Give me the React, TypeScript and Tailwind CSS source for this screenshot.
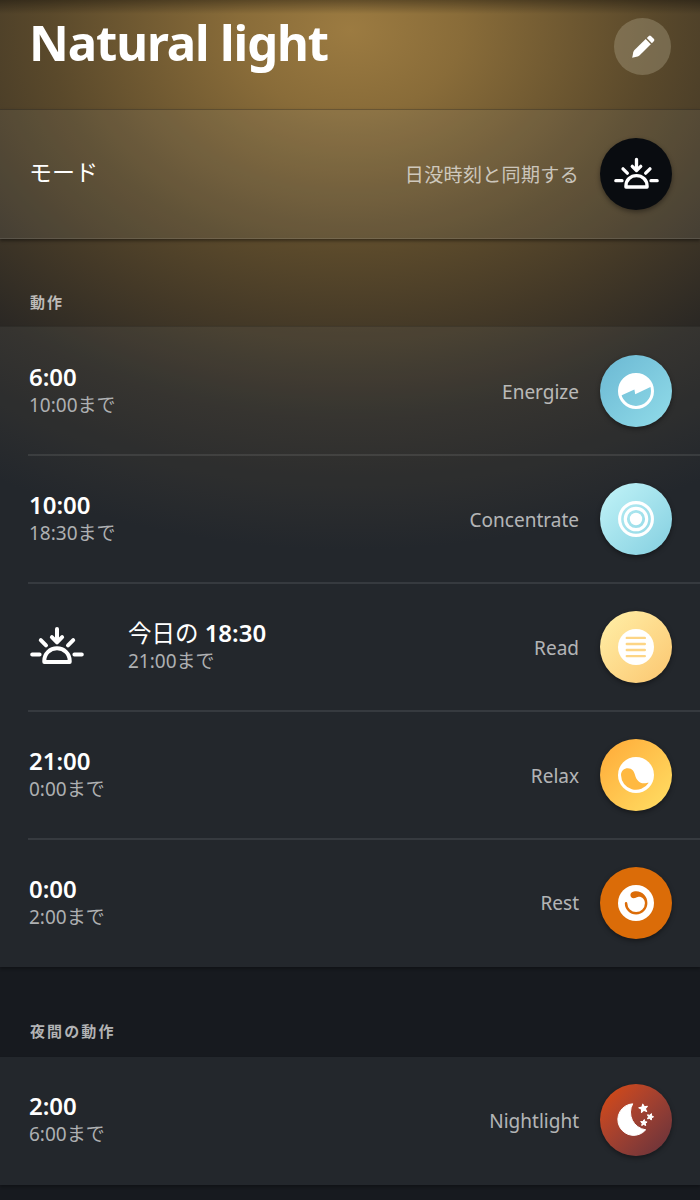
import type { ReactNode } from 'react';

function SunsetIcon({ className }: { className: string }) {
  return (
    <svg viewBox="0 0 54 38" className={className} fill="none" stroke="white" strokeWidth="4" strokeLinecap="round" strokeLinejoin="round">
      <path d="M27 3V15M21.9 11.2 27 16.3 32.1 11.2" />
      <path d="M10.8 14.2 16 19.4M43.2 14.2 38 19.4M2.2 28.4H9.6M44.4 28.4H51.8" />
      <path d="M14.3 36V34.8C14.3 27.6 20 22.3 27 22.3S39.7 27.6 39.7 34.8V36Z" />
    </svg>
  );
}

function EnergizeIcon() {
  return (
    <svg viewBox="0 0 36 36" className="size-9">
      <circle cx="18" cy="18" r="16.5" fill="none" stroke="white" strokeWidth="3" />
      <path d="M1.5 23.2A17.3 17.3 0 0 1 18 .7A17.3 17.3 0 0 1 34 13.2L17.2 21.2 16.4 16.4Z" fill="white" />
    </svg>
  );
}

function ConcentrateIcon() {
  return (
    <svg viewBox="0 0 36 36" className="size-9" fill="none" stroke="white">
      <circle cx="18" cy="18" r="16.4" strokeWidth="3.1" />
      <circle cx="18" cy="18" r="10.7" strokeWidth="3.2" />
      <circle cx="18" cy="18" r="6.2" fill="white" stroke="none" />
    </svg>
  );
}

function ReadIcon() {
  return (
    <svg viewBox="0 0 36 36" className="size-9">
      <circle cx="18" cy="18" r="18" fill="white" />
      <path d="M8.8 8.9H26.8M8.8 15H26.8M8.8 21H26.8M8.8 27.1H26.8" stroke="#fdd585" strokeWidth="2.4" strokeLinecap="round" />
    </svg>
  );
}

function RelaxIcon() {
  return (
    <svg viewBox="0 0 36 36" className="size-9">
      <circle cx="18" cy="18" r="18" fill="white" />
      <path d="M3 18C3 13.6 6.3 11.2 9.8 11.2C14.3 11.2 16 14.4 17.1 18.2C18.3 22.7 21.3 26.3 25.8 26.3C28.4 26.3 30 25.6 30.7 25.8A15 15 0 0 1 3 18Z" fill="#ffb941" />
    </svg>
  );
}

function RestIcon() {
  return (
    <svg viewBox="0 0 36 36" className="size-9">
      <circle cx="18" cy="18" r="18" fill="white" />
      <path d="M15.8 6.6C23.3 5.1 29.4 10.8 29.4 18A11.3 11.3 0 0 1 6.8 18.2Q6.9 16.9 8.1 16.9T9.3 18.2A8.8 8.8 0 0 0 26.9 18.2C26.9 14 23.3 11.2 19.8 12C18.3 12.3 17.4 13.2 15.8 13.2C13.6 13.2 12.4 11.8 12.4 10C12.4 8.2 13.8 7 15.8 6.6Z" fill="#db6c08" />
    </svg>
  );
}

function NightlightIcon() {
  return (
    <svg viewBox="0 0 36 36" className="size-9 overflow-visible" fill="white" stroke="white" strokeLinejoin="round">
      <path d="M14.7 1.8A15.8 15.8 0 1 0 27.7 27.8A17.6 17.6 0 0 1 14.7 1.8Z" strokeWidth="1" />
      <path d="m24.8 2.2 1.5 2.6 3-.4-2 2.3 1.3 2.7-2.9-1.1-2.2 2.1.1-3.1-2.7-1.5 3-.7Z" strokeWidth="1.2" />
      <path d="m33.4 11.6.2 2.3 2 .9-2 1-.3 2.3-1.6-1.7-2.3.4 1.1-2-1.1-2 2.3.4Z" strokeWidth="1" />
      <path d="m26.3 17.5.6 2.2 2.2.3-1.8 1.4.4 2.2-2-1.2-2 1.1.5-2.3-1.6-1.5 2.2-.2Z" strokeWidth="1" />
    </svg>
  );
}

function Scene({ name, color, children }: { name: ReactNode; color: string; children: ReactNode }) {
  return (
    <div className="ml-auto flex items-center gap-[21px]">
      <span className="pt-px text-[19px] leading-7 text-white/67">{name}</span>
      <div className={`flex size-[72px] items-center justify-center rounded-full shadow-[0_2px_5px_rgba(0,0,0,0.4)] ${color}`}>{children}</div>
    </div>
  );
}

function Times({ start, end, prefix }: { start: string; end: string; prefix?: string }) {
  return (
    <div className="flex flex-col pb-0.5">
      <span className="text-2xl leading-[30px] font-semibold text-white">
        {prefix && <span className="text-[23.5px] font-normal">{prefix} </span>}
        {start}
      </span>
      <span className="text-[19px] leading-[26px] text-[#aeb0b2]">{end}まで</span>
    </div>
  );
}

const slots = [
  { start: '6:00', end: '10:00', name: 'Energize', color: 'bg-linear-to-br from-[#6bb8d3] to-[#91dce9]', icon: <EnergizeIcon /> },
  { start: '10:00', end: '18:30', name: 'Concentrate', color: 'bg-linear-to-br from-[#c2f4f8] to-[#83cfe0]', icon: <ConcentrateIcon /> },
  { start: '18:30', end: '21:00', name: 'Read', color: 'bg-linear-to-br from-[#fff0a8] to-[#fbc66f]', icon: <ReadIcon />, prefix: '今日の' },
  { start: '21:00', end: '0:00', name: 'Relax', color: 'bg-linear-to-br from-[#ffa936] to-[#ffdf64]', icon: <RelaxIcon /> },
  { start: '0:00', end: '2:00', name: 'Rest', color: 'bg-[#db6c08]', icon: <RestIcon /> },
];

export default function App() {
  return (
    <main className="h-[1200px] w-[700px] overflow-hidden bg-[#171a1f] bg-[radial-gradient(ellipse_700px_520px_at_350px_30px,#9c7b41_0%,#896c39_16%,#5a492b_43%,#443927_58%,#2b2824_75%,#171a1f_100%)] font-['Noto_Sans','Noto_Sans_CJK_JP',sans-serif]">
      <header className="flex h-[109px] items-start justify-between bg-linear-to-b from-black/35 to-transparent to-[14px] pr-7 pl-[29px]">
        <h1 className="mt-2 text-[49px] leading-[68px] font-bold tracking-[-1.1px] text-white">Natural light</h1>
        <button aria-label="編集" className="mt-[18px] mr-px flex size-[57px] items-center justify-center rounded-full bg-[#aaa085]/40">
          <svg viewBox="0 0 24 24" className="size-6" fill="white">
            <path d="M1.2 22.7 2.3 17.2Q2.6 16 3.5 15.1L14.7 4.1 19.8 9.2 8.7 20.2Q7.8 21 6.6 21.4Z" />
            <path d="m15.8 3 2.1-2q1-.8 2 0l3.1 3.1q.8 1 0 2l-2.1 2.1Z" />
          </svg>
        </button>
      </header>

      <section className="flex h-[130px] items-center border-t border-b border-t-black/25 border-b-white/10 bg-[#a8acb4]/10 pr-7 pl-[29px] shadow-[0_2px_3px_rgba(0,0,0,0.4)]">
        <span className="pb-[5px] text-[23px] leading-8 text-white">モード</span>
        <Scene name={<span className="tracking-[0.35px]">日没時刻と同期する</span>} color="bg-[#090c10]">
          <SunsetIcon className="mb-0.5 w-[45px]" />
        </Scene>
      </section>

      <h2 className="flex h-[87px] items-end pb-3.5 pl-[30px] text-[15px] leading-5 font-bold tracking-[2.1px] text-[#bebbb8]">動作</h2>

      <section className="border-t border-t-black/15 bg-[#a4b0b4]/9 pt-px shadow-[0_2px_3px_rgba(0,0,0,0.3)]">
        {slots.map((slot, i) => (
          <div key={slot.name} className="pl-7">
            <div className={`flex items-center border-b-2 pr-7 pl-px ${i < slots.length - 1 ? 'h-[128px] border-white/9' : 'h-[127px] border-transparent'}`}>
              {slot.prefix && <SunsetIcon className="mr-[44px] mb-[5px] ml-px w-[54px]" />}
              <Times start={slot.start} end={slot.end} prefix={slot.prefix} />
              <Scene name={slot.name} color={slot.color}>{slot.icon}</Scene>
            </div>
          </div>
        ))}
      </section>

      <h2 className="flex h-[90px] items-end pb-4 pl-[30px] text-[15px] leading-5 font-bold tracking-[2.1px] text-[#b2b3b5]">夜間の動作</h2>

      <section className="flex h-[128px] items-center bg-[#a4b0b4]/9 pr-7 pb-0.5 pl-[29px] shadow-[0_2px_3px_rgba(0,0,0,0.3)]">
        <Times start="2:00" end="6:00" />
        <Scene name="Nightlight" color="bg-linear-to-br from-[#de4b00] to-[#63313a]"><NightlightIcon /></Scene>
      </section>
    </main>
  );
}
